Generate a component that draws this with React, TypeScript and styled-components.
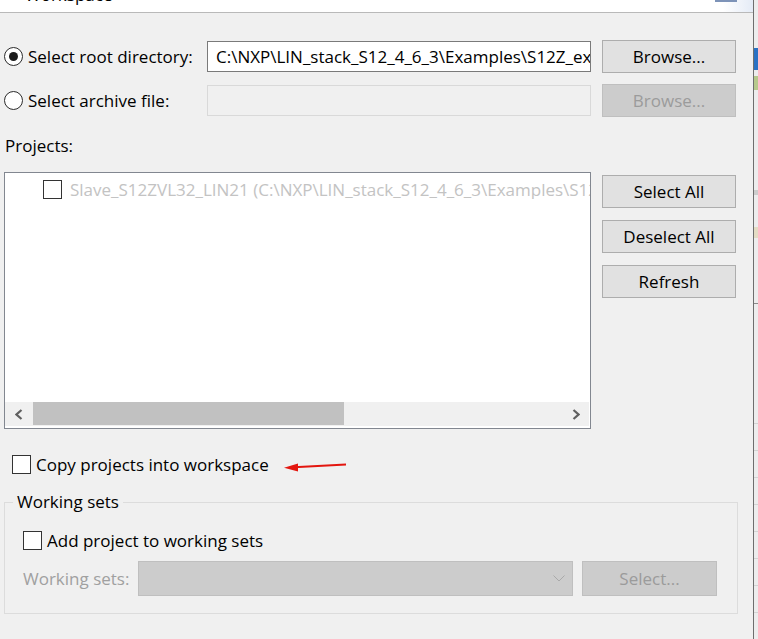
import React from "react";
import styled, { createGlobalStyle } from "styled-components";

const GlobalStyle = createGlobalStyle`
  html, body { margin: 0; padding: 0; background: #f0f0f0; }
  body { font-family: "Open Sans", "Noto Sans", sans-serif; font-size: 17px; color: #000; }
  * { box-sizing: border-box; }
`;

const Screen = styled.div`
  display: flex;
  width: 758px;
  height: 639px;
  overflow: hidden;
`;

const Dialog = styled.div`
  flex: 0 0 754px;
  display: flex;
  flex-direction: column;
  background: #f0f0f0;
  border-right: 1px solid #6e6e6e;
`;

const TitleStrip = styled.div`
  flex: 0 0 13px;
  display: flex;
  align-items: flex-start;
  overflow: hidden;
  background: linear-gradient(to right, #ffffff 0%, #ffffff 96%, #e4ebf6 100%);
  border-bottom: 1px solid #b9b9b9;
  padding-left: 25px;
`;

const TitleText = styled.span`
  margin-top: -17px;
  line-height: 24px;
  white-space: nowrap;
`;

const CloseStub = styled.span`
  margin-left: auto;
  margin-right: 16px;
  width: 22px;
  height: 2px;
  background: #7d93b8;
`;

const Body = styled.div`
  display: flex;
  flex-direction: column;
  padding-top: 27px;
`;

const SourceGrid = styled.div`
  display: grid;
  grid-template-columns: 192px 384px 134px;
  grid-auto-rows: 33px;
  column-gap: 11px;
  row-gap: 11px;
  padding-left: 4px;
`;

const RadioOption = styled.label`
  display: flex;
  align-items: center;
  gap: 5px;
  white-space: nowrap;
`;

const RadioCircle = styled.span<{ $checked?: boolean }>`
  flex: none;
  width: 19px;
  height: 19px;
  border-radius: 50%;
  border: 1px solid #2b2b2b;
  background: #fff;
  display: flex;
  align-items: center;
  justify-content: center;
  &::after {
    content: "";
    width: 9px;
    height: 9px;
    border-radius: 50%;
    background: ${(p) => (p.$checked ? "#1c1c1c" : "transparent")};
  }
`;

const PathField = styled.div<{ $disabled?: boolean }>`
  align-self: center;
  height: 31px;
  border: 1px solid ${(p) => (p.$disabled ? "#d9d9d9" : "#7a7a7a")};
  background: ${(p) => (p.$disabled ? "#f0f0f0" : "#ffffff")};
  padding-left: 8px;
  display: flex;
  align-items: center;
  overflow: hidden;
  white-space: nowrap;
`;

const ClippedText = styled.span`
  flex: 1;
  min-width: 0;
  overflow: hidden;
  white-space: nowrap;
`;

const PushButton = styled.button<{ $height?: number }>`
  width: 100%;
  height: ${(p) => p.$height ?? 33}px;
  margin: 0;
  padding: 0;
  font: inherit;
  font-size: 17px;
  background: ${(p) => (p.disabled ? "#cccccc" : "#e1e1e1")};
  border: 1px solid ${(p) => (p.disabled ? "#bfbfbf" : "#adadad")};
  color: ${(p) => (p.disabled ? "#9b9b9b" : "#000000")};
`;

const SectionLabel = styled.div`
  padding-left: 5px;
  margin-top: 17px;
  line-height: 24px;
`;

const ProjectsArea = styled.div`
  display: grid;
  grid-template-columns: 587px 134px;
  column-gap: 11px;
  padding-left: 4px;
  margin-top: 14px;
  height: 257px;
`;

const ListBox = styled.div`
  border: 1px solid #828790;
  background: #ffffff;
  display: flex;
  flex-direction: column;
  overflow: hidden;
`;

const ItemArea = styled.div`
  flex: 1;
  padding: 7px 0 0 38px;
  overflow: hidden;
`;

const ProjectItem = styled.div`
  display: flex;
  align-items: center;
  gap: 8px;
  height: 19px;
  white-space: nowrap;
  overflow: hidden;
  color: #c3c3c3;
`;

const CheckBox = styled.span`
  flex: none;
  width: 19px;
  height: 19px;
  border: 1px solid #333333;
  background: #ffffff;
`;

const HScrollbar = styled.div`
  flex: 0 0 24px;
  margin: 0 1px 2px 0;
  display: flex;
  background: #f0f0f0;
`;

const ScrollArrow = styled.div`
  flex: 0 0 27px;
  display: flex;
  align-items: center;
  justify-content: center;
`;

const ScrollThumb = styled.div`
  flex: 0 0 311px;
  margin: 0 0 1px 1px;
  background: #c1c1c1;
`;

const ScrollTrack = styled.div`
  flex: 1;
`;

const ButtonColumn = styled.div`
  display: flex;
  flex-direction: column;
  gap: 12px;
  padding-top: 3px;
`;

const CheckRow = styled.label<{ $indent: number; $top: number }>`
  display: flex;
  align-items: center;
  gap: 5px;
  height: 24px;
  margin-top: ${(p) => p.$top}px;
  padding-left: ${(p) => p.$indent}px;
  white-space: nowrap;
`;

const AnnotationArrow = styled.svg`
  margin-left: 10px;
  flex: none;
`;

const GroupBox = styled.fieldset`
  margin: 14px 0 0 4px;
  width: 734px;
  min-width: 0;
  padding: 0 8px 17px 8px;
  border: 1px solid #dcdcdc;
`;

const GroupLegend = styled.legend`
  padding: 0 4px;
  line-height: 24px;
`;

const WorkingSetsRow = styled.div`
  display: grid;
  grid-template-columns: 106px 435px 135px;
  column-gap: 9px;
  height: 35px;
  margin-top: 9px;
  padding-left: 10px;
`;

const DisabledLabel = styled.span`
  display: flex;
  align-items: center;
  color: #a0a0a0;
  white-space: nowrap;
`;

const ComboBox = styled.div`
  background: #cccccc;
  border: 1px solid #bfbfbf;
  display: flex;
  align-items: center;
  justify-content: flex-end;
  padding-right: 7px;
`;

const BackdropStrip = styled.div`
  flex: 1;
  background:
    linear-gradient(#2a72c4, #2a72c4) 0 48px / 100% 22px no-repeat,
    linear-gradient(#b7c98c, #b7c98c) 0 76px / 100% 14px no-repeat,
    linear-gradient(#cdcdcd, #cdcdcd) 0 190px / 100% 5px no-repeat,
    linear-gradient(#e4dcc4, #e4dcc4) 0 227px / 100% 11px no-repeat,
    linear-gradient(#8a8a8a, #8a8a8a) 0 303px / 100% 1px no-repeat,
    repeating-linear-gradient(to bottom, transparent 0 26px, #d4d4d4 26px 27px) 0 397px / 100% 242px no-repeat,
    #ededed;
`;

const Chevron = ({ dir }: { dir: "left" | "right" }) => (
  <svg width="8" height="11" viewBox="0 0 8 11">
    <polyline
      points={dir === "left" ? "6.5,1 1.5,5.5 6.5,10" : "1.5,1 6.5,5.5 1.5,10"}
      fill="none"
      stroke="#606060"
      strokeWidth="2.2"
    />
  </svg>
);

export default function App() {
  return (
    <>
      <GlobalStyle />
      <Screen>
        <Dialog>
          <TitleStrip>
            <TitleText>Workspace</TitleText>
            <CloseStub />
          </TitleStrip>
          <Body>
            <SourceGrid>
              <RadioOption>
                <RadioCircle $checked />
                Select root directory:
              </RadioOption>
              <PathField>
                <ClippedText>C:\NXP\LIN_stack_S12_4_6_3\Examples\S12Z_examples</ClippedText>
              </PathField>
              <PushButton>Browse...</PushButton>
              <RadioOption>
                <RadioCircle />
                Select archive file:
              </RadioOption>
              <PathField $disabled />
              <PushButton disabled>Browse...</PushButton>
            </SourceGrid>

            <SectionLabel>Projects:</SectionLabel>
            <ProjectsArea>
              <ListBox>
                <ItemArea>
                  <ProjectItem>
                    <CheckBox />
                    <ClippedText>
                      Slave_S12ZVL32_LIN21 (C:\NXP\LIN_stack_S12_4_6_3\Examples\S12Z_examples\Slave_S12ZVL32_LIN21)
                    </ClippedText>
                  </ProjectItem>
                </ItemArea>
                <HScrollbar>
                  <ScrollArrow>
                    <Chevron dir="left" />
                  </ScrollArrow>
                  <ScrollThumb />
                  <ScrollTrack />
                  <ScrollArrow>
                    <Chevron dir="right" />
                  </ScrollArrow>
                </HScrollbar>
              </ListBox>
              <ButtonColumn>
                <PushButton>Select All</PushButton>
                <PushButton>Deselect All</PushButton>
                <PushButton>Refresh</PushButton>
              </ButtonColumn>
            </ProjectsArea>

            <CheckRow $indent={12} $top={23}>
              <CheckBox />
              Copy projects into workspace
              <AnnotationArrow width="64" height="24" viewBox="0 0 64 24">
                <line x1="10" y1="15.2" x2="62" y2="12.4" stroke="#e3160f" strokeWidth="2" />
                <polygon points="0,15.8 14,11.6 14,19.6" fill="#e3160f" />
              </AnnotationArrow>
            </CheckRow>

            <GroupBox>
              <GroupLegend>Working sets</GroupLegend>
              <CheckRow $indent={10} $top={14}>
                <CheckBox />
                Add project to working sets
              </CheckRow>
              <WorkingSetsRow>
                <DisabledLabel>Working sets:</DisabledLabel>
                <ComboBox>
                  <svg width="12" height="7" viewBox="0 0 12 7">
                    <polyline points="0.5,0.5 6,6 11.5,0.5" fill="none" stroke="#a9a9a9" strokeWidth="1" />
                  </svg>
                </ComboBox>
                <PushButton disabled $height={35}>
                  Select...
                </PushButton>
              </WorkingSetsRow>
            </GroupBox>
          </Body>
        </Dialog>
        <BackdropStrip />
      </Screen>
    </>
  );
}
